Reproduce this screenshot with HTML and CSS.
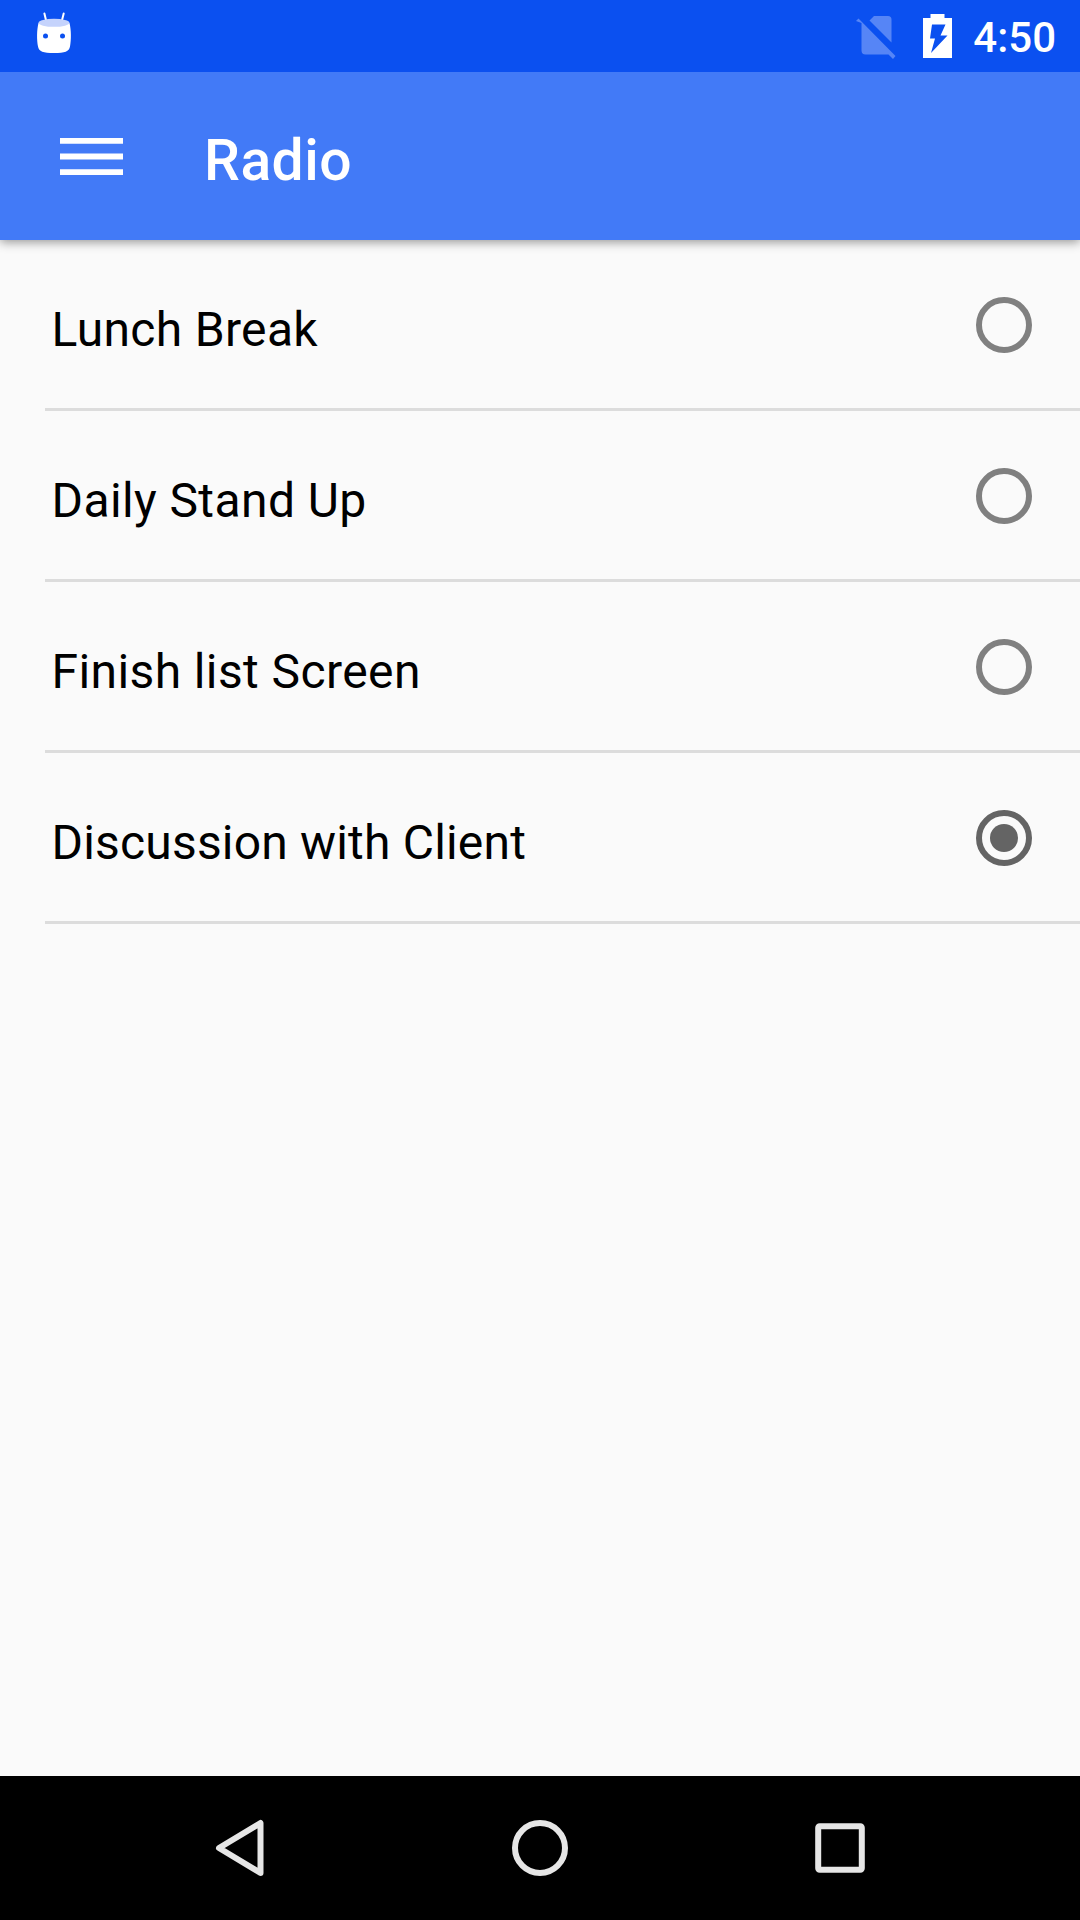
FILE: index.html
```html
<!DOCTYPE html>
<html lang="en">
<head>
<meta charset="utf-8">
<title>Radio</title>
<link rel="stylesheet" href="styles.css">
</head>
<body>
<div class="screen">
  <div class="status-bar">
    <svg class="droid" viewBox="0 0 40 46" width="40" height="46">
      <path d="M10.400 3.500 12.200 11M29.700 3.500 27.800 11" fill="none" stroke="#fff" stroke-width="2" stroke-linecap="round"/>
      <path d="M4.500 13C2.700 20 2.700 30 4 36.500C5 41.500 9 43 20 43C31 43 35 41.500 36 36.500C37.300 30 37.300 20 35.500 13Z" fill="#fff"/>
      <ellipse cx="20" cy="12.800" rx="15.500" ry="4" fill="#c5d3fc"/>
      <circle cx="11.500" cy="26" r="2.500" fill="#0b50f0"/>
      <circle cx="28.500" cy="26" r="2.500" fill="#0b50f0"/>
    </svg>
    <div class="status-icons">
      <svg class="sim" viewBox="0 0 40 44" width="40" height="44">
        <path d="M10.500 6.500 15 2H29Q32.500 2 32.500 5.500V28.500ZM2.500 9V36.500Q2.500 40.500 6.500 40.500H29.500L34 45L36.500 42L-0.500 4.500L-3 7Z" fill="#5685f6"/>
      </svg>
      <svg class="battery" viewBox="0 0 29 44" width="29" height="44">
        <path d="M7.500 0H21.500V4H29V44H0V4H7.500ZM9 10.500 7 24.500H12L8 39 24.500 21.500H17.500L22.500 10.500Z" fill="#fff" fill-rule="evenodd"/>
      </svg>
      <span class="clock">4:50</span>
    </div>
  </div>
  <header class="app-bar">
    <svg class="menu" viewBox="0 0 63 37" width="63" height="37">
      <path d="M0 0H63V5.700H0ZM0 15.500H63V21.500H0ZM0 31.200H63V37H0Z" fill="#fff"/>
    </svg>
    <h1 class="title">Radio</h1>
  </header>
  <main class="content">
    <div class="item"><span>Lunch Break</span><i class="radio"></i></div>
    <div class="item"><span>Daily Stand Up</span><i class="radio"></i></div>
    <div class="item"><span>Finish list Screen</span><i class="radio"></i></div>
    <div class="item"><span>Discussion with Client</span><i class="radio selected"></i></div>
  </main>
  <nav class="nav-bar">
    <svg viewBox="0 0 60 60" width="60" height="60"><path d="M50.500 5V55L9 30Z"/></svg>
    <svg viewBox="0 0 60 60" width="60" height="60"><circle cx="30" cy="30" r="25"/></svg>
    <svg viewBox="0 0 60 60" width="60" height="60"><rect x="8.200" y="8.200" width="43.600" height="43.600" rx="1.500"/></svg>
  </nav>
</div>
</body>
</html>
```
FILE: styles.css
```css
body {
  margin: 0;
  font-family: Roboto, sans-serif;
}
.screen {
  display: flex;
  flex-direction: column;
  width: 1080px;
  height: 1920px;
  overflow: hidden;
  background: #fafafa;
}
.status-bar {
  display: flex;
  position: relative;
  z-index: 1;
  justify-content: space-between;
  flex: none;
  box-sizing: border-box;
  height: 72px;
  padding: 0 24px 0 34px;
  background: #0b50f0;
}
.droid {
  margin-top: 10px;
}
.status-icons {
  display: flex;
  align-items: flex-start;
}
.sim {
  margin: 14px 24px 0 0;
  overflow: visible;
}
.battery {
  margin: 14px 21px 0 0;
}
.clock {
  color: #fff;
  font-size: 42px;
  font-weight: 500;
  line-height: 76px;
}
.app-bar {
  display: flex;
  position: relative;
  align-items: flex-start;
  flex: none;
  box-sizing: border-box;
  height: 168px;
  padding-left: 60px;
  background: #427af7;
  box-shadow: 0 2px 10px rgba(0, 0, 0, 0.42);
}
.menu {
  margin-top: 66px;
}
.title {
  margin: 55px 0 0 81px;
  color: #fff;
  font-size: 57px;
  font-weight: 500;
  line-height: 68px;
  letter-spacing: 0.5px;
}
.content {
  flex: 1;
  padding-left: 45px;
}
.item {
  display: flex;
  justify-content: space-between;
  align-items: flex-start;
  box-sizing: border-box;
  height: 171px;
  padding: 57px 48px 0 6.5px;
  border-bottom: 3px solid #dcdcdc;
  color: #000;
  font-size: 48px;
  line-height: 66px;
  letter-spacing: 0.33px;
}
.item:nth-child(2),
.item:nth-child(3) {
  letter-spacing: 0.4px;
}
.item:nth-child(4) {
  letter-spacing: 0.18px;
}
.radio {
  display: flex;
  align-items: center;
  justify-content: center;
  box-sizing: border-box;
  width: 56px;
  height: 56px;
  border: 6px solid #808080;
  border-radius: 50%;
}
.radio.selected {
  border-color: #646464;
}
.radio.selected::before {
  content: "";
  width: 28px;
  height: 28px;
  border-radius: 50%;
  background: #646464;
}
.nav-bar {
  display: flex;
  justify-content: space-between;
  align-items: center;
  flex: none;
  box-sizing: border-box;
  height: 144px;
  padding: 0 210px;
  background: #000;
}
.nav-bar svg {
  fill: none;
  stroke: #e6e6e6;
  stroke-width: 6px;
  stroke-linejoin: round;
}
```
